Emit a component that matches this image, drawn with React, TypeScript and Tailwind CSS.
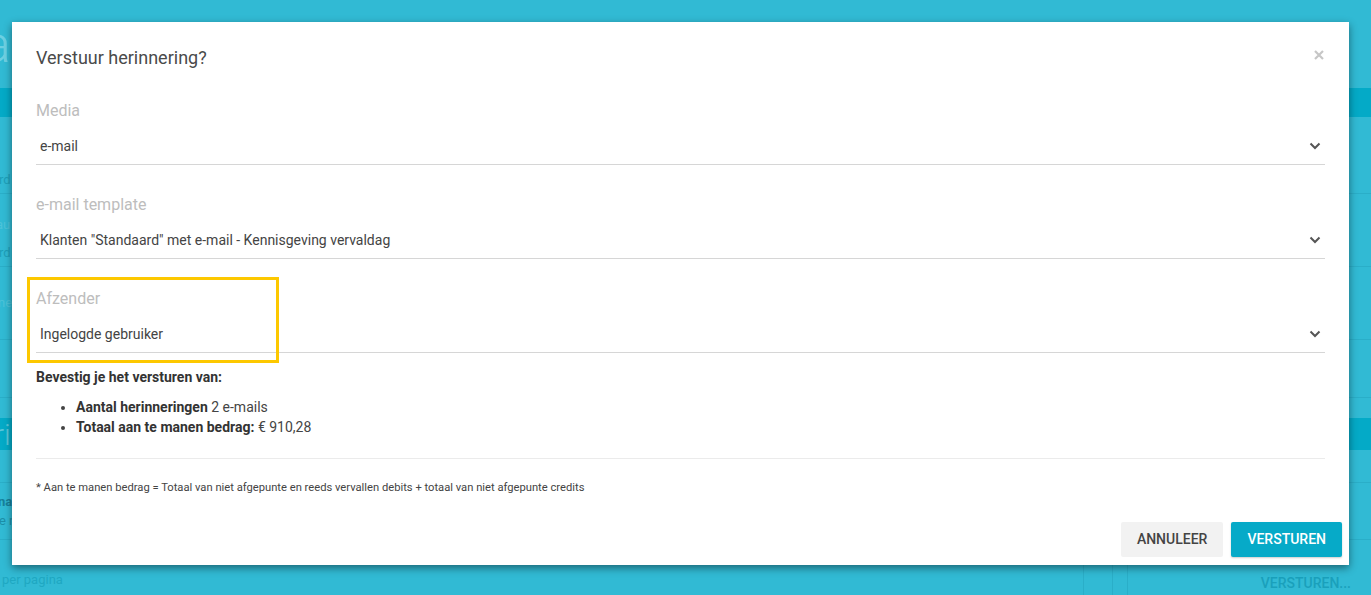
import React from "react";

function Chevron() {
  return (
    <svg width="12" height="8" viewBox="0 0 12 8" className="shrink-0">
      <path d="M1.5 1.5 L6 6 L10.5 1.5" fill="none" stroke="#555" strokeWidth="2" />
    </svg>
  );
}

interface FieldProps {
  label: string;
  value: string;
  highlight?: boolean;
}

function SelectField({ label, value, highlight }: FieldProps) {
  return (
    <div className="relative">
      <div className="pt-[1px] text-[16px] leading-[20px] text-[#bdbdbd]">{label}</div>
      <div className="flex items-center justify-between pl-1 pr-[4px] pt-[15px] pb-2 border-b border-[#d6d6d6]">
        <span className="text-[14px] leading-[20px] text-[#444]">{value}</span>
        <Chevron />
      </div>
      {/* annotation marker */}
      {highlight && (
        <div className="absolute -left-[9px] -top-[11px] w-[252px] h-[86px] border-[3px] border-[#fdc800] pointer-events-none" />
      )}
    </div>
  );
}

function BackgroundPage() {
  return (
    <div className="flex flex-col h-[595px] bg-[#31bad4] text-[#1d9fb8] overflow-hidden">
      <div className="h-[88px] flex items-center">
        <span className="-ml-[17px] text-[52px] font-light text-[#6dd0e2] leading-none mt-[2px]">a</span>
      </div>
      <div className="h-[29px] bg-[#04aac7]" />
      <div className="h-[77px] flex items-end pb-[4px] border-b border-[#2aaec8]">
        <span className="-ml-[8px] text-[13px]">ard</span>
      </div>
      <div className="h-[73px] flex flex-col justify-end pb-[4px] gap-[8px] border-b border-[#2aaec8]">
        <span className="-ml-[4px] text-[13px] text-[#4cc3d9]">au</span>
        <span className="-ml-[8px] text-[13px]">ard</span>
      </div>
      <div className="h-[73px] flex items-center border-b border-[#2aaec8]">
        <span className="-ml-[2px] text-[13px] text-[#4cc3d9]">ne</span>
      </div>
      <div className="h-[58px] border-b border-[#2aaec8]" />
      <div className="h-[20px]" />
      <div className="h-[32px] bg-[#04aac7] flex items-center">
        <span className="-ml-[6px] text-[30px] font-light text-[#5ac6da]">ri</span>
      </div>
      <div className="h-[33px] border-b border-[#2aaec8]" />
      <div className="h-[57px] flex flex-col justify-center border-b border-[#2aaec8]">
        <span className="-ml-[2px] text-[13px] font-bold text-[#17809a]">na</span>
        <span className="-ml-[1px] text-[13px] text-[#1d8fa8]">e r</span>
      </div>
      <div className="flex-1 flex">
        <div className="flex-1 flex items-end pb-[6px]">
          <span className="ml-[2px] text-[13px] text-[#1fa8c2]">per pagina</span>
        </div>
        <div className="w-[29px] border-l border-[#2aaec8]" />
        <div className="w-[15px] border-l border-[#2aaec8]" />
        <div className="w-[244px] border-l border-[#2aaec8] flex items-end justify-end pr-[20px] pb-[1px]">
          <span className="text-[14px] font-medium text-[#1aa0bb]">VERSTUREN...</span>
        </div>
      </div>
    </div>
  );
}

export default function App() {
  return (
    <div className="relative w-[1371px] h-[595px] overflow-hidden font-['Roboto',sans-serif]">
      <BackgroundPage />

      {/* Dialog */}
      <div className="absolute left-[12px] top-[22px] w-[1337px] h-[543px] bg-white shadow-[0_3px_8px_rgba(0,0,0,0.45)] flex flex-col">
        <div className="px-6 pt-6 flex flex-col flex-1">
          <div className="flex items-center justify-between h-6">
            <h2 className="text-[18px] leading-6 text-[#4a4a4a]">Verstuur herinnering?</h2>
            <svg width="10" height="10" viewBox="0 0 10 10" className="mr-[1px] -mt-[6px]">
              <path d="M1 1 L9 9 M9 1 L1 9" stroke="#c6c6c6" strokeWidth="2.2" />
            </svg>
          </div>

          <div className="mt-[30px] flex flex-col gap-[29px]">
            <SelectField label="Media" value="e-mail" />
            <SelectField
              label="e-mail template"
              value={'Klanten "Standaard" met e-mail - Kennisgeving vervaldag'}
            />
            <SelectField label="Afzender" value="Ingelogde gebruiker" highlight />
          </div>

          <p className="mt-[14px] text-[14px] leading-5 font-bold text-[#333]">
            Bevestig je het versturen van:
          </p>
          <ul className="mt-[10px] list-disc pl-10 text-[14px] leading-5 text-[#444]">
            <li>
              <span className="font-bold text-[#333]">Aantal herinneringen</span> 2 e-mails
            </li>
            <li>
              <span className="font-bold text-[#333]">Totaal aan te manen bedrag:</span> € 910,28
            </li>
          </ul>

          <div className="mt-[21px] border-t border-[#ebebeb]" />

          <p className="mt-[21px] text-[11.2px] leading-4 text-[#444]">
            * Aan te manen bedrag = Totaal van niet afgepunte en reeds vervallen debits + totaal van niet afgepunte credits
          </p>
        </div>

        <div className="flex justify-end gap-2 pr-[7px] pb-2">
          <button className="h-[35px] px-4 rounded-[2px] bg-[#f2f2f2] text-[14px] font-medium text-[#444]">
            ANNULEER
          </button>
          <button className="h-[35px] px-4 rounded-[2px] bg-[#06aac8] text-[14px] font-medium text-white shadow-[0_1px_2px_rgba(0,0,0,0.2)]">
            VERSTUREN
          </button>
        </div>
      </div>
    </div>
  );
}
